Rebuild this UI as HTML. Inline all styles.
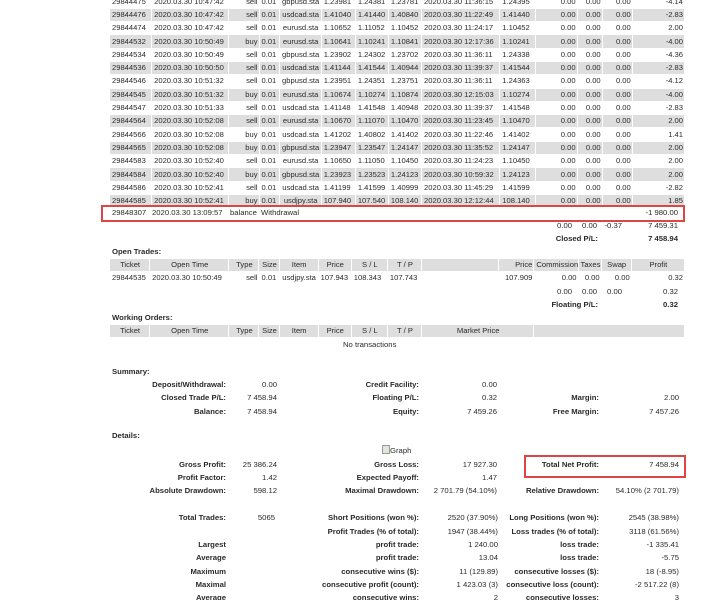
<!DOCTYPE html>
<html><head><meta charset="utf-8"><style>
html,body{margin:0;padding:0;background:#fff;width:720px;height:600px;overflow:hidden;position:relative}
body{font-family:"Liberation Sans",Arial,sans-serif;font-size:7.7px;color:#2a2a2a}
.t{position:absolute;white-space:nowrap;line-height:12px}
.b{font-weight:bold}
table{position:absolute;left:109px;border-collapse:separate;border-spacing:1px;table-layout:fixed;font-size:7.6px}
td{padding:0 1px 0 2px;height:12.3px;line-height:12px;white-space:nowrap;overflow:hidden}
tr.g td{background:#dedede}
.r{text-align:right}.c{text-align:center}
.box{position:absolute;border:2px solid #e04545}
</style></head><body>

<table style="top:-5.5px;width:576px">
<colgroup><col style="width:41px"><col style="width:76px"><col style="width:29px"><col style="width:19px"><col style="width:41px"><col style="width:33px"><col style="width:32px"><col style="width:32px"><col style="width:77px"><col style="width:35px"><col style="width:40px"><col style="width:24px"><col style="width:29px"><col style="width:51px"></colgroup>
<tr><td>29844475</td><td>2020.03.30 10:47:42</td><td class="r">sell</td><td>0.01</td><td class="c">gbpusd.sta</td><td>1.23981</td><td>1.24381</td><td>1.23781</td><td>2020.03.30 11:36:15</td><td>1.24395</td><td class="r">0.00</td><td class="r">0.00</td><td class="r">0.00</td><td class="r">-4.14</td></tr>
<tr class="g"><td>29844476</td><td>2020.03.30 10:47:42</td><td class="r">sell</td><td>0.01</td><td class="c">usdcad.sta</td><td>1.41040</td><td>1.41440</td><td>1.40840</td><td>2020.03.30 11:22:49</td><td>1.41440</td><td class="r">0.00</td><td class="r">0.00</td><td class="r">0.00</td><td class="r">-2.83</td></tr>
<tr><td>29844474</td><td>2020.03.30 10:47:42</td><td class="r">sell</td><td>0.01</td><td class="c">eurusd.sta</td><td>1.10652</td><td>1.11052</td><td>1.10452</td><td>2020.03.30 11:24:17</td><td>1.10452</td><td class="r">0.00</td><td class="r">0.00</td><td class="r">0.00</td><td class="r">2.00</td></tr>
<tr class="g"><td>29844532</td><td>2020.03.30 10:50:49</td><td class="r">buy</td><td>0.01</td><td class="c">eurusd.sta</td><td>1.10641</td><td>1.10241</td><td>1.10841</td><td>2020.03.30 12:17:36</td><td>1.10241</td><td class="r">0.00</td><td class="r">0.00</td><td class="r">0.00</td><td class="r">-4.00</td></tr>
<tr><td>29844534</td><td>2020.03.30 10:50:49</td><td class="r">sell</td><td>0.01</td><td class="c">gbpusd.sta</td><td>1.23902</td><td>1.24302</td><td>1.23702</td><td>2020.03.30 11:36:11</td><td>1.24338</td><td class="r">0.00</td><td class="r">0.00</td><td class="r">0.00</td><td class="r">-4.36</td></tr>
<tr class="g"><td>29844536</td><td>2020.03.30 10:50:50</td><td class="r">sell</td><td>0.01</td><td class="c">usdcad.sta</td><td>1.41144</td><td>1.41544</td><td>1.40944</td><td>2020.03.30 11:39:37</td><td>1.41544</td><td class="r">0.00</td><td class="r">0.00</td><td class="r">0.00</td><td class="r">-2.83</td></tr>
<tr><td>29844546</td><td>2020.03.30 10:51:32</td><td class="r">sell</td><td>0.01</td><td class="c">gbpusd.sta</td><td>1.23951</td><td>1.24351</td><td>1.23751</td><td>2020.03.30 11:36:11</td><td>1.24363</td><td class="r">0.00</td><td class="r">0.00</td><td class="r">0.00</td><td class="r">-4.12</td></tr>
<tr class="g"><td>29844545</td><td>2020.03.30 10:51:32</td><td class="r">buy</td><td>0.01</td><td class="c">eurusd.sta</td><td>1.10674</td><td>1.10274</td><td>1.10874</td><td>2020.03.30 12:15:03</td><td>1.10274</td><td class="r">0.00</td><td class="r">0.00</td><td class="r">0.00</td><td class="r">-4.00</td></tr>
<tr><td>29844547</td><td>2020.03.30 10:51:33</td><td class="r">sell</td><td>0.01</td><td class="c">usdcad.sta</td><td>1.41148</td><td>1.41548</td><td>1.40948</td><td>2020.03.30 11:39:37</td><td>1.41548</td><td class="r">0.00</td><td class="r">0.00</td><td class="r">0.00</td><td class="r">-2.83</td></tr>
<tr class="g"><td>29844564</td><td>2020.03.30 10:52:08</td><td class="r">sell</td><td>0.01</td><td class="c">eurusd.sta</td><td>1.10670</td><td>1.11070</td><td>1.10470</td><td>2020.03.30 11:23:45</td><td>1.10470</td><td class="r">0.00</td><td class="r">0.00</td><td class="r">0.00</td><td class="r">2.00</td></tr>
<tr><td>29844566</td><td>2020.03.30 10:52:08</td><td class="r">buy</td><td>0.01</td><td class="c">usdcad.sta</td><td>1.41202</td><td>1.40802</td><td>1.41402</td><td>2020.03.30 11:22:46</td><td>1.41402</td><td class="r">0.00</td><td class="r">0.00</td><td class="r">0.00</td><td class="r">1.41</td></tr>
<tr class="g"><td>29844565</td><td>2020.03.30 10:52:08</td><td class="r">buy</td><td>0.01</td><td class="c">gbpusd.sta</td><td>1.23947</td><td>1.23547</td><td>1.24147</td><td>2020.03.30 11:35:52</td><td>1.24147</td><td class="r">0.00</td><td class="r">0.00</td><td class="r">0.00</td><td class="r">2.00</td></tr>
<tr><td>29844583</td><td>2020.03.30 10:52:40</td><td class="r">sell</td><td>0.01</td><td class="c">eurusd.sta</td><td>1.10650</td><td>1.11050</td><td>1.10450</td><td>2020.03.30 11:24:23</td><td>1.10450</td><td class="r">0.00</td><td class="r">0.00</td><td class="r">0.00</td><td class="r">2.00</td></tr>
<tr class="g"><td>29844584</td><td>2020.03.30 10:52:40</td><td class="r">buy</td><td>0.01</td><td class="c">gbpusd.sta</td><td>1.23923</td><td>1.23523</td><td>1.24123</td><td>2020.03.30 10:59:32</td><td>1.24123</td><td class="r">0.00</td><td class="r">0.00</td><td class="r">0.00</td><td class="r">2.00</td></tr>
<tr><td>29844586</td><td>2020.03.30 10:52:41</td><td class="r">sell</td><td>0.01</td><td class="c">usdcad.sta</td><td>1.41199</td><td>1.41599</td><td>1.40999</td><td>2020.03.30 11:45:29</td><td>1.41599</td><td class="r">0.00</td><td class="r">0.00</td><td class="r">0.00</td><td class="r">-2.82</td></tr>
<tr class="g"><td>29844585</td><td>2020.03.30 10:52:41</td><td class="r">buy</td><td>0.01</td><td class="c">usdjpy.sta</td><td>107.940</td><td>107.540</td><td>108.140</td><td>2020.03.30 12:12:44</td><td>108.140</td><td class="r">0.00</td><td class="r">0.00</td><td class="r">0.00</td><td class="r">1.85</td></tr>
</table>

<div class="box" style="left:101px;top:205px;width:580px;height:13px"></div>
<div class="t" style="left:112px;top:207px">29848307</div>
<div class="t" style="left:152px;top:207px">2020.03.30 13:09:57</div>
<div class="t" style="left:230px;top:207px">balance</div>
<div class="t" style="left:261px;top:207px">Withdrawal</div>
<div class="t" style="right:42px;top:207px">-1 980.00</div>

<div class="t" style="right:148px;top:220px">0.00</div>
<div class="t" style="right:123px;top:220px">0.00</div>
<div class="t" style="right:98px;top:220px">-0.37</div>
<div class="t" style="right:42px;top:220px">7 459.31</div>
<div class="t b" style="right:122px;top:233px">Closed P/L:</div>
<div class="t b" style="right:42px;top:233px">7 458.94</div>

<div class="t b" style="left:112px;top:246px">Open Trades:</div>
<table style="top:258px;width:576px">
<colgroup><col style="width:39px"><col style="width:78px"><col style="width:29px"><col style="width:19px"><col style="width:38px"><col style="width:32px"><col style="width:35px"><col style="width:33px"><col style="width:76px"><col style="width:34px"><col style="width:43px"><col style="width:22px"><col style="width:29px"><col style="width:52px"></colgroup>
<tr class="g"><td class="c">Ticket</td><td class="c">Open Time</td><td class="c">Type</td><td class="c">Size</td><td class="c">Item</td><td class="c">Price</td><td class="c">S / L</td><td class="c">T / P</td><td></td><td class="r">Price</td><td class="c">Commission</td><td class="c">Taxes</td><td class="c">Swap</td><td class="c">Profit</td></tr>
<tr><td>29844535</td><td>2020.03.30 10:50:49</td><td class="r">sell</td><td>0.01</td><td class="c">usdjpy.sta</td><td>107.943</td><td>108.343</td><td>107.743</td><td></td><td class="r">107.909</td><td class="r">0.00</td><td class="r">0.00</td><td class="r">0.00</td><td class="r">0.32</td></tr>
</table>
<div class="t" style="right:148px;top:286px">0.00</div>
<div class="t" style="right:123px;top:286px">0.00</div>
<div class="t" style="right:98px;top:286px">0.00</div>
<div class="t" style="right:42px;top:286px">0.32</div>
<div class="t b" style="right:122px;top:299px">Floating P/L:</div>
<div class="t b" style="right:42px;top:299px">0.32</div>

<div class="t b" style="left:112px;top:312px">Working Orders:</div>
<table style="top:324px;width:576px">
<colgroup><col style="width:39px"><col style="width:78px"><col style="width:29px"><col style="width:19px"><col style="width:38px"><col style="width:32px"><col style="width:35px"><col style="width:33px"><col style="width:111px"><col style="width:149px"></colgroup>
<tr class="g"><td class="c">Ticket</td><td class="c">Open Time</td><td class="c">Type</td><td class="c">Size</td><td class="c">Item</td><td class="c">Price</td><td class="c">S / L</td><td class="c">T / P</td><td class="c">Market Price</td><td></td></tr>
</table>
<div class="t" style="left:343px;top:339px">No transactions</div>

<div class="t b" style="left:112px;top:366px">Summary:</div>
<div class="t b" style="right:494px;top:379px">Deposit/Withdrawal:</div><div class="t" style="right:443px;top:379px">0.00</div>
<div class="t b" style="right:301px;top:379px">Credit Facility:</div><div class="t" style="right:223px;top:379px">0.00</div>
<div class="t b" style="right:494px;top:392px">Closed Trade P/L:</div><div class="t" style="right:443px;top:392px">7 458.94</div>
<div class="t b" style="right:301px;top:392px">Floating P/L:</div><div class="t" style="right:223px;top:392px">0.32</div>
<div class="t b" style="right:121px;top:392px">Margin:</div><div class="t" style="right:41px;top:392px">2.00</div>
<div class="t b" style="right:494px;top:406px">Balance:</div><div class="t" style="right:443px;top:406px">7 458.94</div>
<div class="t b" style="right:301px;top:406px">Equity:</div><div class="t" style="right:223px;top:406px">7 459.26</div>
<div class="t b" style="right:121px;top:406px">Free Margin:</div><div class="t" style="right:41px;top:406px">7 457.26</div>

<div class="t b" style="left:112px;top:430px">Details:</div>
<div class="t" style="left:382px;top:445px"><span style="display:inline-block;width:6px;height:7px;border:1px solid #999;background:#dfe8d8;vertical-align:-1px"></span>Graph</div>

<div class="box" style="left:524px;top:455px;width:158px;height:19px"></div>
<div class="t b" style="right:494px;top:459px">Gross Profit:</div><div class="t" style="right:443px;top:459px">25 386.24</div>
<div class="t b" style="right:301px;top:459px">Gross Loss:</div><div class="t" style="right:223px;top:459px">17 927.30</div>
<div class="t b" style="right:121px;top:459px">Total Net Profit:</div><div class="t" style="right:41px;top:459px">7 458.94</div>
<div class="t b" style="right:494px;top:472px">Profit Factor:</div><div class="t" style="right:443px;top:472px">1.42</div>
<div class="t b" style="right:301px;top:472px">Expected Payoff:</div><div class="t" style="right:223px;top:472px">1.47</div>
<div class="t b" style="right:494px;top:485px">Absolute Drawdown:</div><div class="t" style="right:443px;top:485px">598.12</div>
<div class="t b" style="right:301px;top:485px">Maximal Drawdown:</div><div class="t" style="right:223px;top:485px">2 701.79 (54.10%)</div>
<div class="t b" style="right:121px;top:485px">Relative Drawdown:</div><div class="t" style="right:41px;top:485px">54.10% (2 701.79)</div>

<div class="t b" style="right:494px;top:512px">Total Trades:</div><div class="t" style="right:445px;top:512px">5065</div>
<div class="t b" style="right:301px;top:512px">Short Positions (won %):</div><div class="t" style="right:222px;top:512px">2520 (37.90%)</div>
<div class="t b" style="right:121px;top:512px">Long Positions (won %):</div><div class="t" style="right:41px;top:512px">2545 (38.98%)</div>
<div class="t b" style="right:301px;top:526px">Profit Trades (% of total):</div><div class="t" style="right:222px;top:526px">1947 (38.44%)</div>
<div class="t b" style="right:121px;top:526px">Loss trades (% of total):</div><div class="t" style="right:41px;top:526px">3118 (61.56%)</div>
<div class="t b" style="right:494px;top:539px">Largest</div>
<div class="t b" style="right:301px;top:539px">profit trade:</div><div class="t" style="right:222px;top:539px">1 240.00</div>
<div class="t b" style="right:121px;top:539px">loss trade:</div><div class="t" style="right:41px;top:539px">-1 335.41</div>
<div class="t b" style="right:494px;top:552px">Average</div>
<div class="t b" style="right:301px;top:552px">profit trade:</div><div class="t" style="right:222px;top:552px">13.04</div>
<div class="t b" style="right:121px;top:552px">loss trade:</div><div class="t" style="right:41px;top:552px">-5.75</div>
<div class="t b" style="right:494px;top:566px">Maximum</div>
<div class="t b" style="right:301px;top:566px">consecutive wins ($):</div><div class="t" style="right:222px;top:566px">11 (129.89)</div>
<div class="t b" style="right:121px;top:566px">consecutive losses ($):</div><div class="t" style="right:41px;top:566px">18 (-8.95)</div>
<div class="t b" style="right:494px;top:579px">Maximal</div>
<div class="t b" style="right:301px;top:579px">consecutive profit (count):</div><div class="t" style="right:222px;top:579px">1 423.03 (3)</div>
<div class="t b" style="right:121px;top:579px">consecutive loss (count):</div><div class="t" style="right:41px;top:579px">-2 517.22 (8)</div>
<div class="t b" style="right:494px;top:592px">Average</div>
<div class="t b" style="right:301px;top:592px">consecutive wins:</div><div class="t" style="right:222px;top:592px">2</div>
<div class="t b" style="right:121px;top:592px">consecutive losses:</div><div class="t" style="right:41px;top:592px">3</div>
</body></html>
